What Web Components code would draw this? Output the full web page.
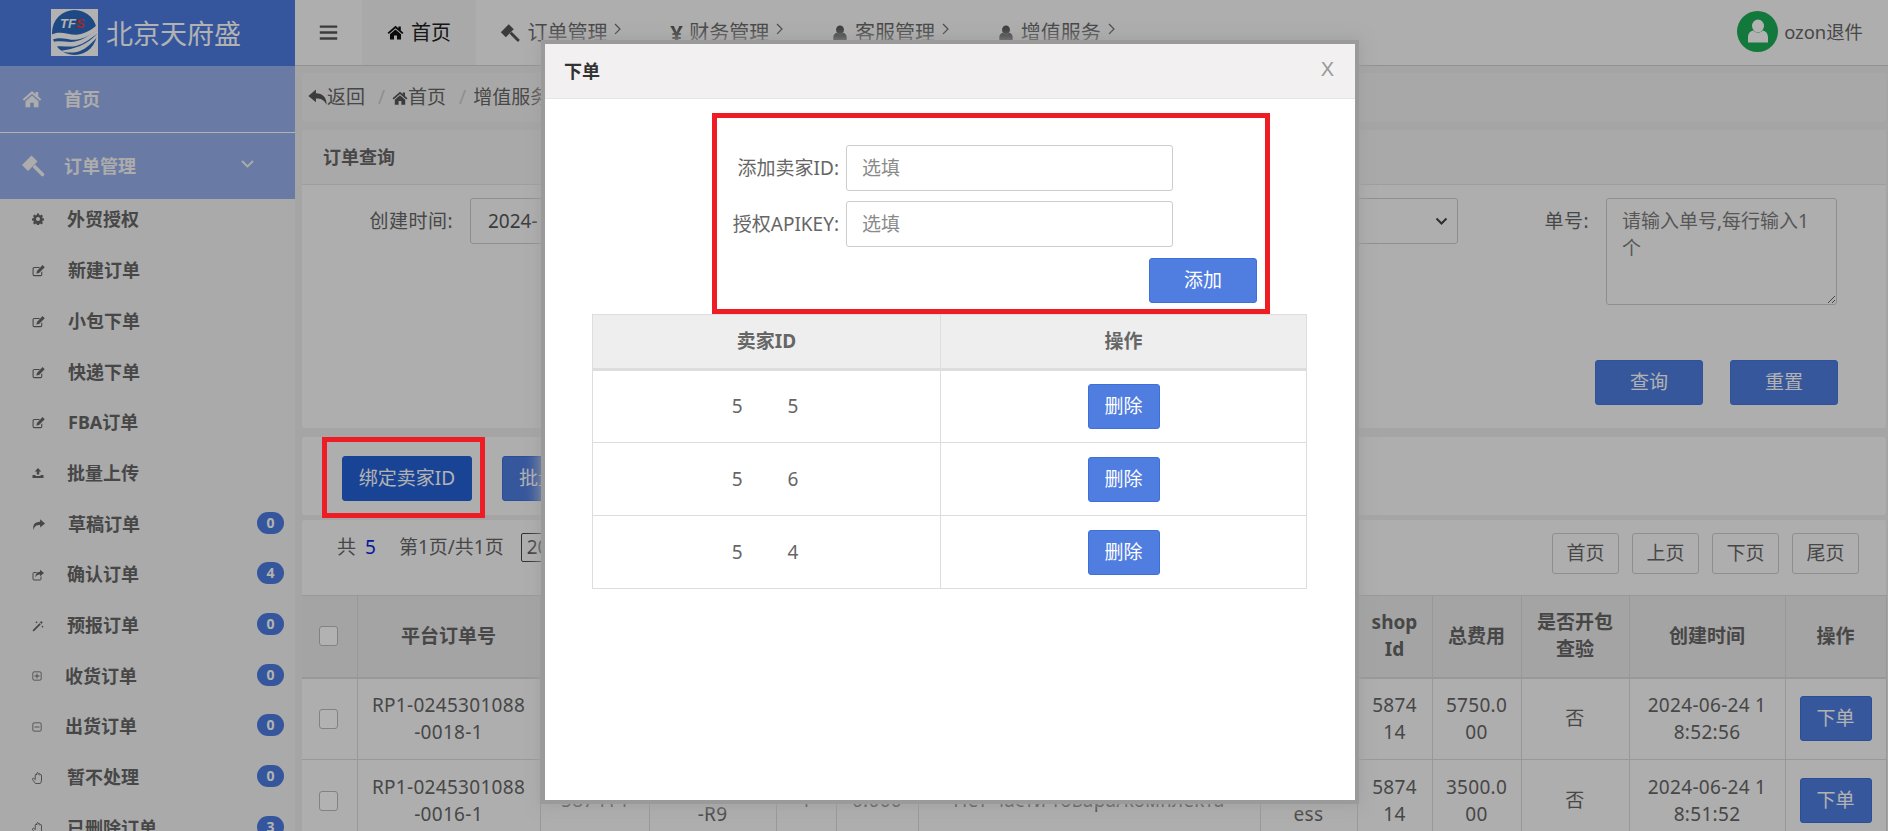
<!DOCTYPE html>
<html lang="zh">
<head>
<meta charset="utf-8">
<title>北京天府盛</title>
<style>
  html, body { margin: 0; height: 831px; overflow: hidden; }
  body { font: 19px/27px "Noto Sans", "Noto Sans CJK SC", sans-serif; color: #666; background: #ededed; }
</style>
</head>
<body>
<app-page>
  <side-bar slot="side"></side-bar>
  <top-nav slot="top"></top-nav>
  <crumb-bar slot="main"></crumb-bar>
  <query-card slot="main"></query-card>
  <action-bar slot="main"></action-bar>
  <pager-bar slot="main"></pager-bar>
  <order-table slot="main"></order-table>
  <page-mask slot="over"></page-mask>
  <mark-frame slot="over" style="left:322px;top:437px;width:163px;height:81px"></mark-frame>
  <seller-modal slot="over"></seller-modal>
</app-page>

<script>
const ICONS = {
  home: '<path d="M12 2.500 .8 12.200l1.700 1.900L12 5.900l9.500 8.200 1.700-1.900L19.500 9V3.600h-3.400v2.500z"/><path d="M4.200 14.600V22h5.700v-5.600h4.200V22h5.700v-7.400L12 7.900z"/>',
  gavel: '<path d="M1 11 10.500 1.500l6 6L7 17z"/><path d="m11.500 13 2.500-2.500 9 9a1.800 1.800 0 0 1-2.500 2.500z"/>',
  user: '<ellipse cx="12" cy="7" rx="6" ry="6.400"/><path d="M2 23.500v-5C2 14.500 4.500 12 7.400 11.600c1.100 1.300 2.800 2.200 4.600 2.200s3.500-.9 4.600-2.200c2.900.4 5.400 2.900 5.400 6.900v5z"/>',
  gear: '<path fill-rule="evenodd" d="M10 1h4l.6 3 1.900.8 2.600-1.700 2.800 2.800-1.700 2.600.8 1.900 3 .6v4l-3 .6-.8 1.900 1.700 2.600-2.800 2.800-2.600-1.700-1.900.8-.6 3h-4l-.6-3-1.900-.8-2.600 1.700-2.800-2.800 1.700-2.600-.8-1.900-3-.6v-4l3-.6.8-1.900-1.700-2.600 2.800-2.800 2.600 1.700 1.900-.8zM12 8a4 4 0 1 0 0 8 4 4 0 0 0 0-8z"/>',
  edit: '<path fill="none" stroke="currentColor" stroke-width="2" d="M18 14.500v5a2 2 0 0 1-2 2H4a2 2 0 0 1-2-2V8.500a2 2 0 0 1 2-2h10"/><path d="M19.500 2 23.500 6 13 16.500l-5 1.200 1.200-5z"/>',
  upload: '<path d="M12 2 5.500 9H9.500v6h5V9h4z"/><path d="M1 16h6v2h10v-2h6v6H1z"/>',
  share: '<path d="M15 2.500 24 10l-9 7.500V13C8 13 4.500 15 3 22 .5 13 5 7 15 6.800z"/>',
  sharebox: '<path fill="none" stroke="currentColor" stroke-width="2" d="M18 15v5a2 2 0 0 1-2 2H4a2 2 0 0 1-2-2V9a2 2 0 0 1 2-2h5"/><path d="M16 1.500 24 8l-8 6.500V11c-5 0-7.500 1.500-8.500 6C6 10 9.500 5.500 16 5.300z"/>',
  magic: '<path d="M1 20.500 15 6.500l2.500 2.500L3.500 23z"/><path d="m18.500 1 1.200 2.800 2.800 1.200-2.800 1.200-1.200 2.800-1.200-2.800L14.500 5l2.800-1.200zM9 2l.8 1.700L11.500 4.500l-1.700.8L9 7l-.8-1.700L6.500 4.500l1.700-.8zM21 11l.8 1.700 1.700.8-1.700.8-.8 1.700-.8-1.700-1.700-.8 1.700-.8z"/>',
  plusbox: '<rect x="2" y="2" width="20" height="20" rx="3" fill="none" stroke="currentColor" stroke-width="2"/><path d="M11 6h2v5h5v2h-5v5h-2v-5H6v-2h5z"/>',
  minusbox: '<rect x="2" y="2" width="20" height="20" rx="3" fill="none" stroke="currentColor" stroke-width="2"/><path d="M6 11h12v2H6z"/>',
  hand: '<path fill="none" stroke="currentColor" stroke-width="1.800" stroke-linejoin="round" d="M7 23c-1.500-2.500-4.500-5-6-8-.8-1.800 1.300-3.400 3-2l2.500 2.200V6c0-2.200 3-2.200 3 0V3c0-2.300 3.200-2.300 3.200 0v1.500c0-2.100 3.100-2.100 3.100 0V6.500c0-2 3.200-2 3.200 0V16c0 3-1 5.200-2.500 7z"/>',
  reply: '<path d="M10 2 .5 10l9.500 8v-4.800c6.500 0 10 1.300 13.500 7.800 0-9-5-14.300-13.500-14.300z"/>',
  menu: '<path d="M1 3h22v3H1zM1 10.500h22v3H1zM1 18h22v3H1z"/>'
};

class FaIcon extends HTMLElement {
  constructor() {
    super();
    const size = this.getAttribute("size") || 16;
    this.attachShadow({ mode: "open" }).innerHTML = `
      <style>
        :host { display: inline-flex; flex: none; color: inherit; }
        svg { display: block; fill: currentColor; }
      </style>
      <svg width="${size}" height="${size}" viewBox="0 0 24 24">${ICONS[this.getAttribute("name")] || ""}</svg>`;
  }
}

class UiBtn extends HTMLElement {
  constructor() {
    super();
    this.attachShadow({ mode: "open" }).innerHTML = `
      <style>
        :host {
          display: inline-flex; align-items: center; justify-content: center; box-sizing: border-box;
          width: 108px; height: 45px; flex: none; color: #fff; background: #4f7de0;
          border: 1px solid #3f6fd8; border-radius: 3px;
        }
        :host([tone="dark"]) { background: #2460d4; border-color: #2460d4; }
      </style>
      <slot></slot>`;
  }
}

class AppPage extends HTMLElement {
  constructor() {
    super();
    this.attachShadow({ mode: "open" }).innerHTML = `
      <style>
        :host { display: grid; grid-template-columns: 295px 1fr; grid-template-rows: 66px 1fr;
                position: relative; width: 1888px; height: 831px; overflow: hidden; }
        .side { grid-row: 1 / 3; }
        .main { display: flex; flex-direction: column; padding: 7px 2px 0 7px; min-width: 0; }
      </style>
      <div class="side"><slot name="side"></slot></div>
      <div><slot name="top"></slot></div>
      <div class="main"><slot name="main"></slot></div>
      <slot name="over"></slot>`;
  }
}

class SideBar extends HTMLElement {
  constructor() {
    super();
    const subs = [
      ["gear", 12, "外贸授权"], ["edit", 13, "新建订单"], ["edit", 13, "小包下单"], ["edit", 13, "快递下单"],
      ["edit", 13, "FBA订单"], ["upload", 12, "批量上传"], ["share", 13, "草稿订单", 0], ["sharebox", 12, "确认订单", 4],
      ["magic", 12, "预报订单", 0], ["plusbox", 10, "收货订单", 0], ["minusbox", 10, "出货订单", 0],
      ["hand", 12, "暂不处理", 0], ["hand", 12, "已删除订单", 3]
    ];
    const rows = subs.map(([icon, size, text, badge]) => `
      <a class="sub">
        <fa-icon name="${icon}" size="${size}"></fa-icon>
        <span class="t">${text}</span>
        ${badge === undefined ? "" : `<b class="badge">${badge}</b>`}
      </a>`).join("");
    this.attachShadow({ mode: "open" }).innerHTML = `
      <style>
        :host { display: block; height: 831px; background: #f4f4f4; overflow: hidden; }
        .brand { display: flex; align-items: center; height: 66px; padding-left: 51px; gap: 8px; background: #4c7be0;
                 color: #fff; font-size: 27px; box-sizing: border-box; }
        .brand svg { display: block; margin-top: -1px; }
        .top { display: flex; align-items: center; height: 66px; padding: 0 41px 0 22px; background: #97b0ec;
               color: #f7f7f7; font: bold 18px/27px "Noto Sans", "Noto Sans CJK SC", sans-serif; }
        .top span { margin-left: 22px; flex: 1; }
        .line { height: 1px; background: #fff; }
        .list { display: flex; flex-direction: column; gap: 8.700px; }
        .sub { display: flex; align-items: center; height: 42px; padding: 0 11px 0 32px;
               color: #666; font: bold 18px/27px "Noto Sans", "Noto Sans CJK SC", sans-serif; }
        .sub:first-child { margin: -1px 0 1px; }
        .t { margin-left: 23px; flex: 1; white-space: nowrap; }
        .badge { display: block; width: 27px; height: 22px; margin-top: -3px; border-radius: 11px; background: #4c7be0;
                 color: #fff; font: bold 14px/22px "Noto Sans", sans-serif; text-align: center; }
      </style>
      <div class="brand">
        <svg width="47" height="47" viewBox="0 0 47 47">
          <rect width="47" height="47" fill="#fff"/>
          <circle cx="23.500" cy="23.500" r="22.500" fill="#2c69bd"/>
          <path d="M0 26c10-6 20 2 30-1 6-2 11-4 17-10v5c-6 6-12 8-18 10-9 3-18-4-29 1z" fill="#fff"/>
          <path d="M0 34c9-4 17 1 26-2 7-2 13-6 21-12v4c-8 6-14 11-22 13-8 2-16-2-25 2z" fill="#fff"/>
          <path d="M9 42c8-1 14-3 20-5 7-3 12-7 18-13v3c-6 7-11 12-18 15-6 2-12 2-20 0z" fill="#fff"/>
          <text x="9" y="19" font-family="Liberation Sans" font-size="13" font-weight="700" font-style="italic" fill="#fff">TF<tspan fill="#e03a3a">S</tspan></text>
        </svg>
        <span>北京天府盛</span>
      </div>
      <div class="top"><fa-icon name="home" size="20"></fa-icon><span>首页</span></div>
      <div class="line"></div>
      <div class="top" style="padding-left:21px">
        <fa-icon name="gavel" size="24"></fa-icon><span style="margin-left:19px">订单管理</span>
        <svg width="13" height="8" viewBox="0 0 13 8" style="margin-top:-4px"><path d="M1 1l5.500 5.500L12 1" fill="none" stroke="currentColor" stroke-width="1.800"/></svg>
      </div>
      <div class="list">${rows}</div>`;
  }
}

class TopNav extends HTMLElement {
  constructor() {
    super();
    const items = [["gavel", 20, "订单管理"], ["", 0, "财务管理"], ["user", 16, "客服管理"], ["user", 16, "增值服务"]];
    const links = items.map(([icon, size, text]) => `
      <a class="item">
        ${icon ? `<fa-icon name="${icon}" size="${size}"></fa-icon>` : `<span class="yen">¥</span>`}
        <span>${text}</span><svg class="gt" width="7" height="12" viewBox="0 0 7 12"><path d="M1 1l5 5-5 5" fill="none" stroke="currentColor" stroke-width="1.200"/></svg>
      </a>`).join("");
    this.attachShadow({ mode: "open" }).innerHTML = `
      <style>
        :host { display: flex; align-items: stretch; height: 66px; box-sizing: border-box; background: #fafafa;
                border-bottom: 1px solid #d2d2d2; font-size: 20px; line-height: 27px; color: #666; }
        .burger { display: flex; align-items: center; justify-content: center; width: 67px; color: #555; }
        .item { display: flex; align-items: center; gap: 7px; padding: 0 24.400px; white-space: nowrap; }
        .item.on { background: #f2f2f2; color: #222; padding: 0 25px; }
        .item fa-icon { color: #555; }
        .on fa-icon { color: #111; }
        .yen { width: 12px; font-size: 22px; font-weight: 700; color: #555; text-align: center; }
        .gt { margin-top: -8px; }
        .me { display: flex; align-items: center; gap: 6px; margin-left: auto; padding-right: 25px; font-size: 18.400px; }
        .face { display: flex; align-items: center; justify-content: center; width: 41px; height: 41px;
                border-radius: 50%; background: #1cad56; color: #fff; margin-top: -3px; }
        .me span { margin-top: -3px; }
      </style>
      <a class="burger"><fa-icon name="menu" size="19"></fa-icon></a>
      <a class="item on"><fa-icon name="home" size="17"></fa-icon><span>首页</span></a>
      ${links}
      <div class="me"><div class="face"><fa-icon name="user" size="24"></fa-icon></div><span>ozon退件</span></div>`;
  }
}

class CrumbBar extends HTMLElement {
  constructor() {
    super();
    this.attachShadow({ mode: "open" }).innerHTML = `
      <style>
        :host { display: flex; align-items: center; height: 49px; padding-left: 6px; background: #f1f1f1; border-radius: 3px;
                white-space: nowrap; margin-bottom: 8px; }
        .sep { margin: 0 5px 0 11px; padding: 0 2px; color: #ccc; }
        fa-icon { color: #555; }
      </style>
      <fa-icon name="reply" size="19"></fa-icon><span>返回</span>
      <span class="sep">/</span>
      <fa-icon name="home" size="16"></fa-icon><span>首页</span>
      <span class="sep">/</span>
      <span>增值服务</span>`;
  }
}

class QueryCard extends HTMLElement {
  constructor() {
    super();
    this.attachShadow({ mode: "open" }).innerHTML = `
      <style>
        :host { display: block; height: 298px; background: #fafafa; border-radius: 3px; box-sizing: border-box; }
        .head { height: 55px; box-sizing: border-box; padding-left: 21px; background: #f2f2f2; border-bottom: 1px solid #e2e2e2;
                font-weight: 700; font-size: 18px; line-height: 54px; color: #666; }
        .row { display: flex; align-items: flex-start; padding-top: 13px; }
        label { flex: none; line-height: 46px; text-align: right; letter-spacing: .5px; }
        .box { box-sizing: border-box; height: 46px; border: 1px solid #ccc; border-radius: 3px; background: #fafafa;
               padding: 0 17px; line-height: 44px; color: #555; }
        .sel { position: relative; display: flex; justify-content: flex-end; align-items: center; padding: 0 9px; }
        textarea { flex: none; box-sizing: border-box; width: 231px; height: 107px; margin: 0; padding: 9px 15px; border: 1px solid #ccc; border-radius: 3px;
                   background: #fafafa; font: inherit; line-height: 27px; color: #555; outline: none; }
        textarea::placeholder { color: #7d7d7d; opacity: 1; }
        .btns { display: flex; justify-content: flex-end; gap: 27px; padding: 55px 48px 0 0; }
        ui-btn { border-color: #4476dd; }
      </style>
      <div class="head">订单查询</div>
      <div class="row">
        <label style="width:151px;margin-right:17px">创建时间:</label>
        <div class="box" style="width:200px">2024-</div>
        <div class="box sel" style="width:700px;margin-left:88px">
          <svg width="13" height="9" viewBox="0 0 13 9"><path d="M1.500 1.500l5 5 5-5" fill="none" stroke="#444" stroke-width="2"/></svg>
        </div>
        <label style="width:131px;margin-right:17px">单号:</label>
        <textarea placeholder="请输入单号,每行输入1个"></textarea>
      </div>
      <div class="btns"><ui-btn>查询</ui-btn><ui-btn>重置</ui-btn></div>`;
  }
}

class ActionBar extends HTMLElement {
  constructor() {
    super();
    this.attachShadow({ mode: "open" }).innerHTML = `
      <style>
        :host { display: flex; gap: 30px; box-sizing: border-box; height: 78px; margin: 9px 0 5px; padding: 19px 0 0 40px;
                background: #fafafa; border-radius: 3px; }
        ui-btn { white-space: nowrap; }
      </style>
      <ui-btn tone="dark" style="width:130px">绑定卖家ID</ui-btn>
      <ui-btn style="width:130px;justify-content:flex-start;padding-left:16px">批量下单</ui-btn>`;
  }
}

class PagerBar extends HTMLElement {
  constructor() {
    super();
    const pages = ["首页", "上页", "下页", "尾页"].map(p => `<a class="pg">${p}</a>`).join("");
    this.attachShadow({ mode: "open" }).innerHTML = `
      <style>
        :host { display: flex; align-items: flex-start; box-sizing: border-box; height: 75px; padding: 13px 27px 0 35px;
                background: #fafafa; border-radius: 3px 3px 0 0; white-space: nowrap; }
        .info { line-height: 29px; }
        .n { margin: 0 23px 0 9px; color: #0b26e0; }
        .size { box-sizing: border-box; width: 60px; height: 29px; margin-left: 17px; padding-left: 5px; border: 1px solid #444;
                border-radius: 2px; line-height: 27px; color: #555; }
        .pages { display: flex; gap: 13px; margin-left: auto; }
        .pg { box-sizing: border-box; width: 67px; height: 41px; border: 1px solid #ccc; border-radius: 3px; line-height: 39px; text-align: center; }
      </style>
      <span class="info">共<span class="n">5</span>第1页/共1页</span>
      <span class="size">20</span>
      <div class="pages">${pages}</div>`;
  }
}

class OrderTable extends HTMLElement {
  constructor() {
    super();
    const widths = [55, 183, 109, 127, 60, 82, 342, 97, 75, 89, 108, 156, 101];
    this.attachShadow({ mode: "open" }).innerHTML = `
      <style>
        :host { display: block; }
        table { width: 1584px; table-layout: fixed; border-collapse: collapse; background: #fafafa; }
        th, td { box-sizing: border-box; height: 82px; padding: 0; border: 1px solid #dadada; text-align: center; vertical-align: middle; }
        td { letter-spacing: .3px; }
        th { background: #ebebeb; border-bottom: 2px solid #dadada; font-weight: 700; color: #666; }
        tr > :first-child { border-left: 0; }
        .ck { display: block; box-sizing: border-box; width: 19px; height: 20px; margin: 0 auto 0 17px; border: 1px solid #bbb; border-radius: 3px; background: #fff; }
        ui-btn { width: 72px; vertical-align: middle; letter-spacing: 0; }
      </style>
      <table>
        <colgroup>${widths.map(w => `<col style="width:${w}px">`).join("")}</colgroup>
        <tr>
          <th><i class="ck"></i></th><th>平台订单号</th><th></th><th></th><th></th><th></th><th></th><th></th>
          <th>shop<br>Id</th><th>总费用</th><th>是否开包<br>查验</th><th>创建时间</th><th>操作</th>
        </tr>
        <tr>
          <td><i class="ck"></i></td><td>RP1-0245301088<br>-0018-1</td><td></td><td></td><td></td><td></td><td></td><td></td>
          <td>5874<br>14</td><td>5750.0<br>00</td><td>否</td><td>2024-06-24 1<br>8:52:56</td><td><ui-btn>下单</ui-btn></td>
        </tr>
        <tr>
          <td><i class="ck"></i></td><td>RP1-0245301088<br>-0016-1</td><td>587414</td><td>&nbsp;<br>-R9</td><td>1</td><td>0.000</td>
          <td>Нет части товара/комплекта</td><td>&nbsp;<br>ess</td>
          <td>5874<br>14</td><td>3500.0<br>00</td><td>否</td><td>2024-06-24 1<br>8:51:52</td><td><ui-btn>下单</ui-btn></td>
        </tr>
      </table>`;
  }
}

class PageMask extends HTMLElement {
  constructor() {
    super();
    this.attachShadow({ mode: "open" }).innerHTML = `
      <style>:host { position: absolute; inset: 0; background: rgba(0, 0, 0, .3); }</style>`;
  }
}

class MarkFrame extends HTMLElement {
  constructor() {
    super();
    this.attachShadow({ mode: "open" }).innerHTML = `
      <style>:host { position: absolute; box-sizing: border-box; border: 5px solid #ee1c25; }</style>`;
  }
}

class SellerModal extends HTMLElement {
  constructor() {
    super();
    const rows = [[5, 5], [5, 6], [5, 4]].map(([a, b]) => `
      <tr>
        <td><span class="id"><span>${a}</span><span>${b}</span></span></td>
        <td><ui-btn style="width:72px">删除</ui-btn></td>
      </tr>`).join("");
    this.attachShadow({ mode: "open" }).innerHTML = `
      <style>
        :host { position: absolute; left: 545px; top: 44px; width: 810px; height: 756px; background: #fff; color: #666;
                box-shadow: 0 0 0 4px #9a9a9a, 0 0 14px 6px rgba(160, 160, 160, .85); }
        .head { display: flex; justify-content: space-between; align-items: center; box-sizing: border-box; height: 55px;
                padding: 0 21px 0 19px; background: #f2f0f1; border-bottom: 1px solid #e5e5e5; color: #333; font-weight: 700; font-size: 18px; }
        .x { font: 20px "Liberation Sans", sans-serif; color: #999; margin-top: -3px; }
        .mark { box-sizing: border-box; width: 558px; height: 201px; margin: 14px 0 0 167px; padding: 27px 8px 0 0;
                border: 5px solid #ee1c25; display: grid; grid-template-columns: 1fr 327px 84px; row-gap: 10px; align-content: start; }
        label { display: flex; justify-content: flex-end; align-items: center; padding-right: 7px; white-space: nowrap; }
        input { box-sizing: border-box; width: 327px; height: 46px; margin: 0; padding: 0 15px; border: 1px solid #ccc; border-radius: 3px;
                font: inherit; color: #555; background: #fff; outline: none; }
        input::placeholder { color: #8a8a8a; opacity: 1; }
        .add { grid-column: 1 / 4; display: flex; justify-content: flex-end; margin-top: 1px; }
        table { width: 715px; margin: 0 0 0 47px; table-layout: fixed; border-collapse: collapse; }
        th, td { box-sizing: border-box; padding: 0; border: 1px solid #ddd; text-align: center; }
        th { height: 55px; background: #eee; border-bottom: 3px solid #ddd; font-weight: 700; color: #666; }
        td { height: 73px; }
        .id { display: inline-flex; gap: 45px; margin-right: 3px; }
      </style>
      <div class="head"><span>下单</span><span class="x">X</span></div>
      <div class="mark">
        <label>添加卖家ID:</label><input placeholder="选填"><span></span>
        <label>授权APIKEY:</label><input placeholder="选填"><span></span>
        <div class="add"><ui-btn>添加</ui-btn></div>
      </div>
      <table>
        <colgroup><col style="width:348px"><col></colgroup>
        <tr><th>卖家ID</th><th>操作</th></tr>
        ${rows}
      </table>`;
  }
}

customElements.define("fa-icon", FaIcon);
customElements.define("ui-btn", UiBtn);
customElements.define("side-bar", SideBar);
customElements.define("top-nav", TopNav);
customElements.define("crumb-bar", CrumbBar);
customElements.define("query-card", QueryCard);
customElements.define("action-bar", ActionBar);
customElements.define("pager-bar", PagerBar);
customElements.define("order-table", OrderTable);
customElements.define("page-mask", PageMask);
customElements.define("mark-frame", MarkFrame);
customElements.define("seller-modal", SellerModal);
customElements.define("app-page", AppPage);
</script>
</body>
</html>
